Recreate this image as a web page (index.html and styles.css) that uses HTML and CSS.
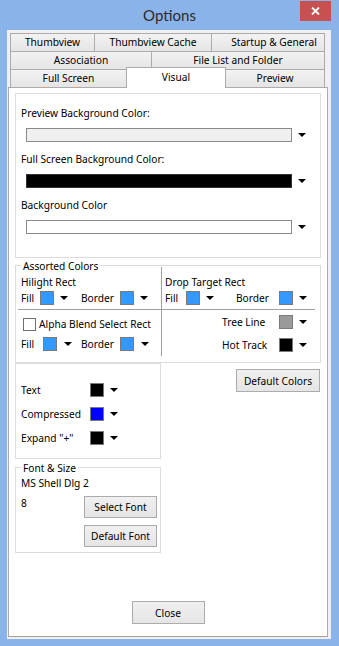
FILE: index.html
```html
<!DOCTYPE html>
<html lang="en">
<head>
    <meta charset="UTF-8">
    <title>Options</title>
    <link rel="stylesheet" href="styles.css">
</head>
<body>
    <!-- Title bar -->
    <div class="titlebar">
        <span></span>
        <span class="title">Options</span>
        <span class="close">
            <svg width="9" height="8" viewBox="0 0 9 8"><path d="M1 0.5 L8 7.5 M8 0.5 L1 7.5" stroke="#fff" stroke-width="1.8"/></svg>
        </span>
    </div>

    <div class="client">
        <!-- Tab rows -->
        <div class="tab-row row-top">
            <div class="tab t-thumb">Thumbview</div>
            <div class="tab t-cache">Thumbview Cache</div>
            <div class="tab t-startup">Startup &amp; General</div>
        </div>
        <div class="tab-row">
            <div class="tab t-assoc">Association</div>
            <div class="tab t-filelist">File List and Folder</div>
        </div>
        <div class="tab-row row-last">
            <div class="tab t-full">Full Screen</div>
            <div class="tab t-visual active">Visual</div>
            <div class="tab t-preview">Preview</div>
        </div>

        <!-- Visual page -->
        <div class="panel">
            <div class="group bg-colors">
                <div class="field-label">Preview Background Color:</div>
                <div class="combo-row">
                    <span class="combo combo-gray"></span><span class="arrow"></span>
                </div>
                <div class="field-label">Full Screen Background Color:</div>
                <div class="combo-row">
                    <span class="combo combo-black"></span><span class="arrow"></span>
                </div>
                <div class="field-label">Background Color</div>
                <div class="combo-row">
                    <span class="combo combo-white"></span><span class="arrow"></span>
                </div>
            </div>

            <div class="group assorted">
                <div class="legend">Assorted Colors</div>
                <div class="assorted-grid">
                    <div class="cell cell-tl">
                        <div class="cell-title">Hilight Rect</div>
                        <div class="pick-row">
                            <span class="lbl">Fill</span><span class="swatch sky"></span><span class="arrow"></span>
                            <span class="lbl lbl-border">Border</span><span class="swatch sky"></span><span class="arrow"></span>
                        </div>
                    </div>
                    <div class="cell cell-tr">
                        <div class="cell-title">Drop Target Rect</div>
                        <div class="pick-row">
                            <span class="lbl">Fill</span><span class="swatch sky"></span><span class="arrow"></span>
                            <span class="lbl lbl-border">Border</span><span class="swatch sky"></span><span class="arrow"></span>
                        </div>
                    </div>
                    <div class="cell cell-bl">
                        <div class="check-row"><span class="checkbox"></span>Alpha Blend Select Rect</div>
                        <div class="pick-row">
                            <span class="lbl">Fill</span><span class="swatch sky"></span><span class="arrow"></span>
                            <span class="lbl lbl-border">Border</span><span class="swatch sky"></span><span class="arrow"></span>
                        </div>
                    </div>
                    <div class="cell cell-br">
                        <div class="pick-row">
                            <span class="lbl">Tree Line</span><span class="swatch gray"></span><span class="arrow"></span>
                        </div>
                        <div class="pick-row">
                            <span class="lbl">Hot Track</span><span class="swatch black"></span><span class="arrow"></span>
                        </div>
                    </div>
                </div>
            </div>

            <div class="lower">
                <div class="lower-left">
                    <div class="group text-colors">
                        <div class="pick-row">
                            <span class="lbl">Text</span><span class="swatch black"></span><span class="arrow"></span>
                        </div>
                        <div class="pick-row">
                            <span class="lbl">Compressed</span><span class="swatch blue"></span><span class="arrow"></span>
                        </div>
                        <div class="pick-row">
                            <span class="lbl">Expand "+"</span><span class="swatch black"></span><span class="arrow"></span>
                        </div>
                    </div>

                    <div class="group font-size">
                        <div class="legend">Font &amp; Size</div>
                        <div class="font-name">MS Shell Dlg 2</div>
                        <div class="font-row">
                            <span>8</span>
                            <div class="font-buttons">
                                <button class="btn btn-font">Select Font</button>
                                <button class="btn btn-font">Default Font</button>
                            </div>
                        </div>
                    </div>
                </div>
                <div class="lower-right">
                    <button class="btn btn-default-colors">Default Colors</button>
                </div>
            </div>

            <button class="btn btn-close">Close</button>
        </div>
    </div>
</body>
</html>
```

FILE: styles.css
```css
/* Window frame */
* {
    box-sizing: border-box;
}

body {
    margin: 0;
    width: 339px;
    height: 646px;
    overflow: hidden;
    background-color: #8ab3ea;
    font-family: "Noto Sans", sans-serif;
    font-size: 10.2px;
    line-height: 14px;
    color: #000;
    display: flex;
    flex-direction: column;
}

.titlebar {
    height: 30px;
    display: grid;
    grid-template-columns: 1fr auto 1fr;
    align-items: start;
}

.title {
    font-family: Lato, sans-serif;
    font-size: 15px;
    line-height: 30px;
    color: #2b2b2b;
}

.close {
    justify-self: end;
    width: 31px;
    height: 20px;
    margin: 1px 8px 0 0;
    background-color: #c75050;
    display: flex;
    align-items: center;
    justify-content: center;
}

/* Client area */
.client {
    height: 609px;
    margin: 0 8px 0 7px;
    padding-top: 3px;
    background-color: #f0f0f0;
    display: flex;
    flex-direction: column;
}

/* Tabs */
.tab-row {
    display: flex;
    margin-left: 3px;
}

.tab {
    height: 18px;
    line-height: 17px;
    text-align: center;
    white-space: nowrap;
    border-right: 1px solid #acacac;
    border-bottom: 1px solid #acacac;
    background: linear-gradient(#f2f2f2, #e5e5e5);
}

.tab:first-child {
    border-left: 1px solid #acacac;
}

.row-top .tab {
    height: 19px;
    border-top: 1px solid #acacac;
}

.row-last {
    height: 17px;
}

.row-last .tab {
    height: 17px;
    border-bottom: none;
}

.t-thumb { width: 85px; }
.t-cache { width: 117px; }
.t-startup { width: 113px; padding-left: 12px; }
.t-assoc { width: 142px; }
.t-filelist { width: 173px; }
.t-full { width: 117px; }
.t-preview { width: 99px; }

.tab.active {
    position: relative;
    z-index: 1;
    width: 100px;
    height: 21px;
    margin: -3px 0 0 -1px;
    line-height: 19px;
    align-self: flex-start;
    background: #fff;
    border-top: 1px solid #acacac;
    border-left: 1px solid #acacac;
}

/* Tab page */
.panel {
    flex: none;
    width: 320px;
    height: 550px;
    margin-left: 1px;
    padding: 5px 6px 12px;
    background-color: #fff;
    border: 1px solid #acacac;
    border-bottom-color: #a0a0a0;
    display: flex;
    flex-direction: column;
}

.group {
    border: 1px solid #dcdcdc;
}

.legend {
    width: fit-content;
    margin: -7px 0 0 5px;
    padding: 0 2px;
    background-color: #fff;
}

/* Background colours */
.bg-colors {
    padding: 12px 0 23px 5px;
}

.field-label {
    margin-top: 10px;
}

.field-label:first-child {
    margin-top: 0;
}

.combo-row {
    display: flex;
    align-items: center;
    margin: 8px 0 0 5px;
}

.combo {
    width: 266px;
    height: 14px;
    border: 1px solid #8a8a8a;
}

.combo-gray { background-color: #f0f0f0; }
.combo-black { background-color: #000; border-color: #333; }
.combo-white { background-color: #fff; }

.arrow {
    width: 0;
    height: 0;
    margin-left: 6px;
    border-left: 4px solid transparent;
    border-right: 4px solid transparent;
    border-top: 4px solid #000;
}

/* Assorted colours */
.assorted {
    margin-top: 7px;
    padding-bottom: 6px;
}

.assorted .legend {
    margin-bottom: -6px;
}

.assorted-grid {
    display: grid;
    grid-template-columns: 144px 153px;
    margin: 0 5px 0 2px;
}

.cell {
    padding-left: 3px;
}

.cell-tl,
.cell-tr {
    padding-top: 8px;
    padding-bottom: 4px;
    border-bottom: 1px solid #a0a0a0;
}

.cell-tl,
.cell-bl {
    border-right: 1px solid #a0a0a0;
}

.cell-title {
    margin-bottom: 2px;
}

.pick-row {
    display: flex;
    align-items: center;
    height: 14px;
    white-space: nowrap;
}

.swatch {
    width: 14px;
    height: 14px;
    border: 1px solid #7a7a7a;
}

.sky { background-color: #3399ff; }
.gray { background-color: #9a9a9a; }
.black { background-color: #000; }
.blue { background-color: #0000ff; }

.cell-tl .lbl { width: 19px; }
.cell-tl .lbl-border { width: 39px; margin-left: 13px; }

.cell-tr .lbl { width: 21px; }
.cell-tr .lbl-border { width: 43px; margin-left: 22px; }

.cell-bl {
    padding-top: 7px;
    padding-bottom: 5px;
}

.cell-bl .lbl { width: 22px; }
.cell-bl .arrow { margin-left: 7px; }
.cell-bl .lbl-border { width: 39px; margin-left: 9px; }
.cell-bl .pick-row { margin-top: 6px; }

.check-row {
    display: flex;
    align-items: center;
    height: 14px;
    white-space: nowrap;
}

.checkbox {
    width: 13px;
    height: 13px;
    margin: 0 3px 0 2px;
    border: 1px solid #707070;
    background-color: #fff;
}

.cell-br {
    padding: 5px 0 4px 60px;
}

.cell-br .lbl { width: 57px; }
.cell-br .pick-row + .pick-row { margin-top: 9px; }

/* Lower section */
.lower {
    display: flex;
}

.lower-left {
    width: 146px;
}

.lower-right {
    flex: 1;
    display: flex;
    justify-content: flex-end;
    align-items: flex-start;
}

.text-colors {
    padding: 19px 0 13px 5px;
}

.text-colors .lbl { width: 69px; }
.text-colors .pick-row + .pick-row { margin-top: 10px; }

.font-size {
    margin-top: 8px;
    padding: 0 3px 5px 5px;
}

.font-size .legend {
    margin-left: 0;
}

.font-name {
    margin-top: 1px;
}

.font-row {
    display: flex;
    justify-content: space-between;
    margin-top: 6px;
}

.font-buttons {
    display: flex;
    flex-direction: column;
    gap: 7px;
}

/* Buttons */
.btn {
    font-family: inherit;
    font-size: inherit;
    color: #000;
    padding: 0;
    border: 1px solid #acacac;
    background: linear-gradient(#f0f0f0, #e5e5e5);
}

.btn-font {
    width: 73px;
    height: 22px;
}

.btn-default-colors {
    width: 84px;
    height: 23px;
    margin: 6px 1px 0 0;
}

.btn-close {
    width: 73px;
    height: 23px;
    margin: auto auto 0;
}
```
